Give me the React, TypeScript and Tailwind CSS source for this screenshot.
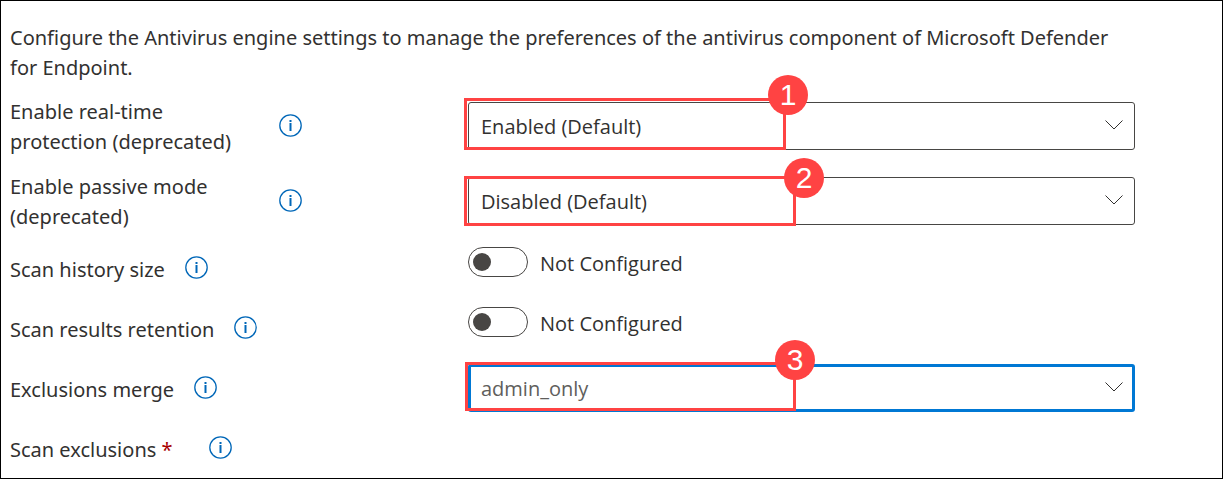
import { useState, type ReactNode } from "react";

function InfoButton({ topic }: { topic: string }) {
  return (
    <button type="button" aria-label={`About ${topic}`} className="block h-7 shrink-0 pt-px pb-1 text-[#0067b8]">
      <svg width="23" height="23" viewBox="0 0 23 23" aria-hidden="true">
        <circle cx="11.5" cy="11.5" r="10.7" fill="none" stroke="currentColor" strokeWidth="1.3" />
        <rect x="10.5" y="6" width="2" height="2" fill="currentColor" />
        <rect x="10.5" y="9" width="2" height="8" fill="currentColor" />
      </svg>
    </button>
  );
}

function Callout({ number, box, badge }: { number: number; box: string; badge: string }) {
  return (
    <>
      <div className={`pointer-events-none absolute border-3 border-[#ff4343] ${box}`} />
      <div
        className={`pointer-events-none absolute flex size-10 items-center justify-center rounded-full bg-[#ff4343] font-['Liberation_Sans',Arial,sans-serif] text-[30px] leading-10 text-white ${badge}`}
      >
        {number}
      </div>
    </>
  );
}

function Dropdown({
  id,
  options,
  look,
  children,
}: {
  id: string;
  options: string[];
  look: string;
  children?: ReactNode;
}) {
  const [value, setValue] = useState(options[0]);
  return (
    <div className="relative font-['Open_Sans',sans-serif]">
      <select
        id={id}
        value={value}
        onChange={(e) => setValue(e.target.value)}
        className={`block h-12 w-full appearance-none rounded-[3px] bg-white pt-0.5 pr-12 outline-none ${look}`}
      >
        {options.map((o) => (
          <option key={o}>{o}</option>
        ))}
      </select>
      <svg
        width="20"
        height="12"
        viewBox="0 0 20 12"
        aria-hidden="true"
        className="pointer-events-none absolute top-[17px] right-[11px]"
      >
        <path d="M1.5 1.5 10 10 18.5 1.5" fill="none" stroke="#323130" strokeWidth="1" />
      </svg>
      {children}
    </div>
  );
}

function Toggle({ id }: { id: string }) {
  const [on, setOn] = useState(false);
  return (
    <div className="flex items-start gap-3 font-['Open_Sans',sans-serif]">
      <input
        id={id}
        type="checkbox"
        role="switch"
        checked={on}
        onChange={(e) => setOn(e.target.checked)}
        className="relative h-[30px] w-[60px] shrink-0 appearance-none rounded-full border border-[#484644] bg-white before:absolute before:top-[5px] before:left-1 before:size-[18px] before:rounded-full before:bg-[#484644] checked:before:left-9"
      />
      <span className="leading-[34px]">{on ? "Configured" : "Not Configured"}</span>
    </div>
  );
}

const row = "grid grid-cols-[458px_1fr] items-start";
const plain = "border border-[#484644] pl-3 text-[#323130]";

export default function App() {
  return (
    <main className="min-h-screen border border-black bg-white pt-[22px] pr-[87px] pl-[9px] font-['Noto_Sans',sans-serif] text-[20px] leading-[30px] text-[#323130]">
      <p>
        Configure the Antivirus engine settings to manage the preferences of the antivirus component of Microsoft
        Defender for Endpoint.
      </p>
      <form className="mt-[14px] flex flex-col gap-[15px]">
        <div className={row}>
          <div className="flex items-center gap-5">
            <label htmlFor="realtime" className="max-w-[249px]">
              Enable real-time protection (deprecated)
            </label>
            <InfoButton topic="real-time protection" />
          </div>
          <div className="pt-[5px]">
            <Dropdown id="realtime" options={["Enabled (Default)", "Disabled"]} look={plain}>
              <Callout number={1} box="-top-1 -left-1 h-[52px] w-[322px]" badge="-top-[27px] left-[300px]" />
            </Dropdown>
          </div>
        </div>
        <div className={row}>
          <div className="flex items-center gap-5">
            <label htmlFor="passive" className="max-w-[249px]">
              Enable passive mode (deprecated)
            </label>
            <InfoButton topic="passive mode" />
          </div>
          <div className="pt-[5px]">
            <Dropdown id="passive" options={["Disabled (Default)", "Enabled"]} look={plain}>
              <Callout number={2} box="-top-px -left-1 h-[50px] w-[332px]" badge="-top-[19px] left-[316px]" />
            </Dropdown>
          </div>
        </div>
        <div className={`${row} min-h-[45px]`}>
          <div className="flex gap-5 pt-2">
            <label htmlFor="history">Scan history size</label>
            <InfoButton topic="scan history size" />
          </div>
          <Toggle id="history" />
        </div>
        <div className={`${row} min-h-[42px]`}>
          <div className="flex gap-5 pt-2">
            <label htmlFor="retention">Scan results retention</label>
            <InfoButton topic="scan results retention" />
          </div>
          <Toggle id="retention" />
        </div>
        <div className={row}>
          <div className="flex gap-5 pt-[11px]">
            <label htmlFor="merge">Exclusions merge</label>
            <InfoButton topic="exclusions merge" />
          </div>
          <Dropdown id="merge" options={["admin_only", "merge"]} look="border-3 border-[#0078d4] pl-[10px] text-[#605e5c]">
            <Callout number={3} box="-top-[2px] -left-[3px] h-[49px] w-[331px]" badge="-top-6 left-[307px]" />
          </Dropdown>
        </div>
        <div className="flex gap-9 pt-2">
          <span>
            Scan exclusions <span className="text-[#a80000]">*</span>
          </span>
          <InfoButton topic="scan exclusions" />
        </div>
      </form>
    </main>
  );
}
